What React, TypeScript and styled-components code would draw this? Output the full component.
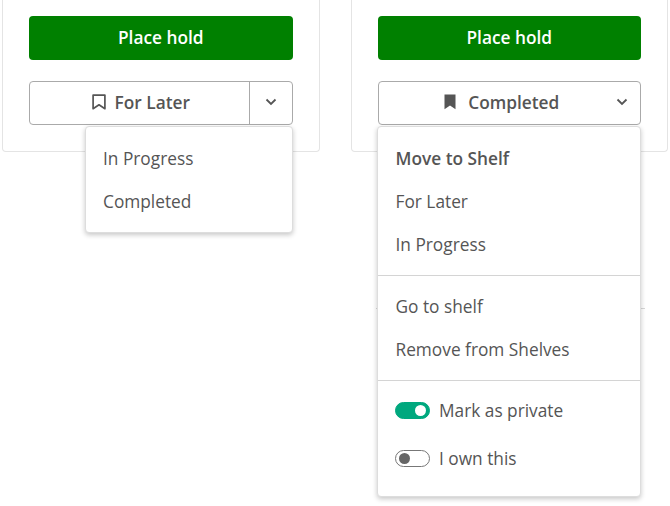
import styled, { createGlobalStyle } from "styled-components";

const GlobalStyle = createGlobalStyle`
  html, body {
    margin: 0;
    padding: 0;
    background: #fff;
    overflow: hidden;
  }
  body {
    font-family: "Open Sans", "Liberation Sans", sans-serif;
    color: #555;
  }
`;

const Page = styled.div`
  width: 670px;
  height: 506px;
  display: flex;
  gap: 31px;
  padding-left: 2px;
  box-sizing: border-box;
`;

const Column = styled.div`
  width: 317.5px;
  flex: none;
`;

const Card = styled.div`
  box-sizing: border-box;
  height: 152px;
  padding: 16px 26px 0;
  border: 1px solid #e4e4e4;
  border-top: none;
  border-radius: 0 0 4px 4px;
`;

const HoldButton = styled.button`
  display: block;
  width: 100%;
  height: 44px;
  margin-bottom: 21px;
  padding: 0 0 2px;
  border: none;
  border-radius: 4px;
  background: #008000;
  color: #fff;
  font: 600 17.3px "Open Sans", sans-serif;
`;

const ShelfControl = styled.div`
  position: relative;
  display: flex;
  height: 44px;
  box-sizing: border-box;
  border: 1px solid #aaa;
  border-radius: 4px;
  background: #fff;
`;

const ShelfButton = styled.div<{ $inset: number; $gap: number }>`
  flex: 1;
  display: flex;
  align-items: center;
  justify-content: center;
  gap: ${(p) => p.$gap}px;
  padding: 0 0 2px ${(p) => p.$inset}px;
  font-size: 17.3px;
  font-weight: 600;
  color: #555;
`;

const Caret = styled.div<{ $split?: boolean }>`
  width: ${(p) => (p.$split ? 43 : 37)}px;
  flex: none;
  box-sizing: border-box;
  display: flex;
  align-items: center;
  justify-content: center;
  padding-bottom: 2px;
  color: #555;
  border-left: ${(p) => (p.$split ? "1px solid #aaa" : "none")};
`;

const Menu = styled.div<{ $width: number }>`
  position: absolute;
  z-index: 2;
  top: 44px;
  right: -1px;
  width: ${(p) => p.$width}px;
  box-sizing: border-box;
  background: #fff;
  border: 1px solid #ddd;
  border-radius: 4px;
  box-shadow: 0 2px 5px rgba(0, 0, 0, 0.22);
`;

const Section = styled.div<{ $top: number; $bottom: number }>`
  padding: ${(p) => p.$top}px 0 ${(p) => p.$bottom}px;
  & + & {
    border-top: 1px solid #d4d4d4;
  }
`;

const Item = styled.div<{ $bold?: boolean }>`
  height: 43px;
  box-sizing: border-box;
  display: flex;
  align-items: center;
  padding: 0 0 1px 17.5px;
  font-size: 17.3px;
  font-weight: ${(p) => (p.$bold ? 600 : 400)};
  color: #555;
`;

const ToggleRow = styled.label`
  height: 48.4px;
  display: flex;
  align-items: center;
  gap: 9px;
  padding-left: 17px;
  font-size: 17.3px;
  color: #555;
`;

const Toggle = styled.span<{ $on?: boolean }>`
  width: 35px;
  height: 17px;
  flex: none;
  box-sizing: border-box;
  display: flex;
  align-items: center;
  justify-content: ${(p) => (p.$on ? "flex-end" : "flex-start")};
  padding: 0 3px;
  border-radius: 9px;
  border: 1px solid ${(p) => (p.$on ? "#00a87e" : "#777")};
  background: ${(p) => (p.$on ? "#00a87e" : "#fff")};
`;

const Knob = styled.span<{ $on?: boolean }>`
  width: 11px;
  height: 11px;
  border-radius: 50%;
  background: ${(p) => (p.$on ? "#fff" : "#666")};
`;

const RuleRow = styled.div`
  height: 1px;
  width: 269px;
  margin: 156px 0 0 25px;
  background: #d8d8d8;
`;

function Bookmark({ filled }: { filled?: boolean }) {
  if (filled) {
    return (
      <svg width="16" height="18" viewBox="0 0 16 18" fill="#555">
        <path d="M2.5 1.5h11v14.7L8 12.4l-5.5 3.8z" />
      </svg>
    );
  }
  return (
    <svg width="16" height="18" viewBox="0 0 16 18" fill="none" stroke="#555" strokeWidth="1.7">
      <path d="M2.1 2.1h11.8v13.6L8 11.8l-5.9 3.9z" strokeLinejoin="round" />
    </svg>
  );
}

function Chevron() {
  return (
    <svg width="12" height="8" viewBox="0 0 12 8" fill="none" stroke="#555" strokeWidth="1.8">
      <path d="M1.5 1.5 6 6l4.5-4.5" />
    </svg>
  );
}

function App() {
  return (
    <Page>
      <GlobalStyle />
      <Column>
        <Card>
          <HoldButton>Place hold</HoldButton>
          <ShelfControl>
            <ShelfButton $inset={2} $gap={8}>
              <Bookmark />
              For Later
            </ShelfButton>
            <Caret $split>
              <Chevron />
            </Caret>
            <Menu $width={208}>
              <Section $top={10} $bottom={9}>
                <Item>In Progress</Item>
                <Item>Completed</Item>
              </Section>
            </Menu>
          </ShelfControl>
        </Card>
      </Column>
      <Column>
        <Card>
          <HoldButton>Place hold</HoldButton>
          <ShelfControl>
            <ShelfButton $inset={20} $gap={10}>
              <Bookmark filled />
              Completed
            </ShelfButton>
            <Caret>
              <Chevron />
            </Caret>
            <Menu $width={264}>
              <Section $top={10} $bottom={9}>
                <Item $bold>Move to Shelf</Item>
                <Item>For Later</Item>
                <Item>In Progress</Item>
              </Section>
              <Section $top={9} $bottom={9}>
                <Item>Go to shelf</Item>
                <Item>Remove from Shelves</Item>
              </Section>
              <Section $top={5} $bottom={13.2}>
                <ToggleRow>
                  <Toggle $on>
                    <Knob $on />
                  </Toggle>
                  Mark as private
                </ToggleRow>
                <ToggleRow>
                  <Toggle>
                    <Knob />
                  </Toggle>
                  I own this
                </ToggleRow>
              </Section>
            </Menu>
          </ShelfControl>
        </Card>
        <RuleRow />
      </Column>
    </Page>
  );
}

export default App;
